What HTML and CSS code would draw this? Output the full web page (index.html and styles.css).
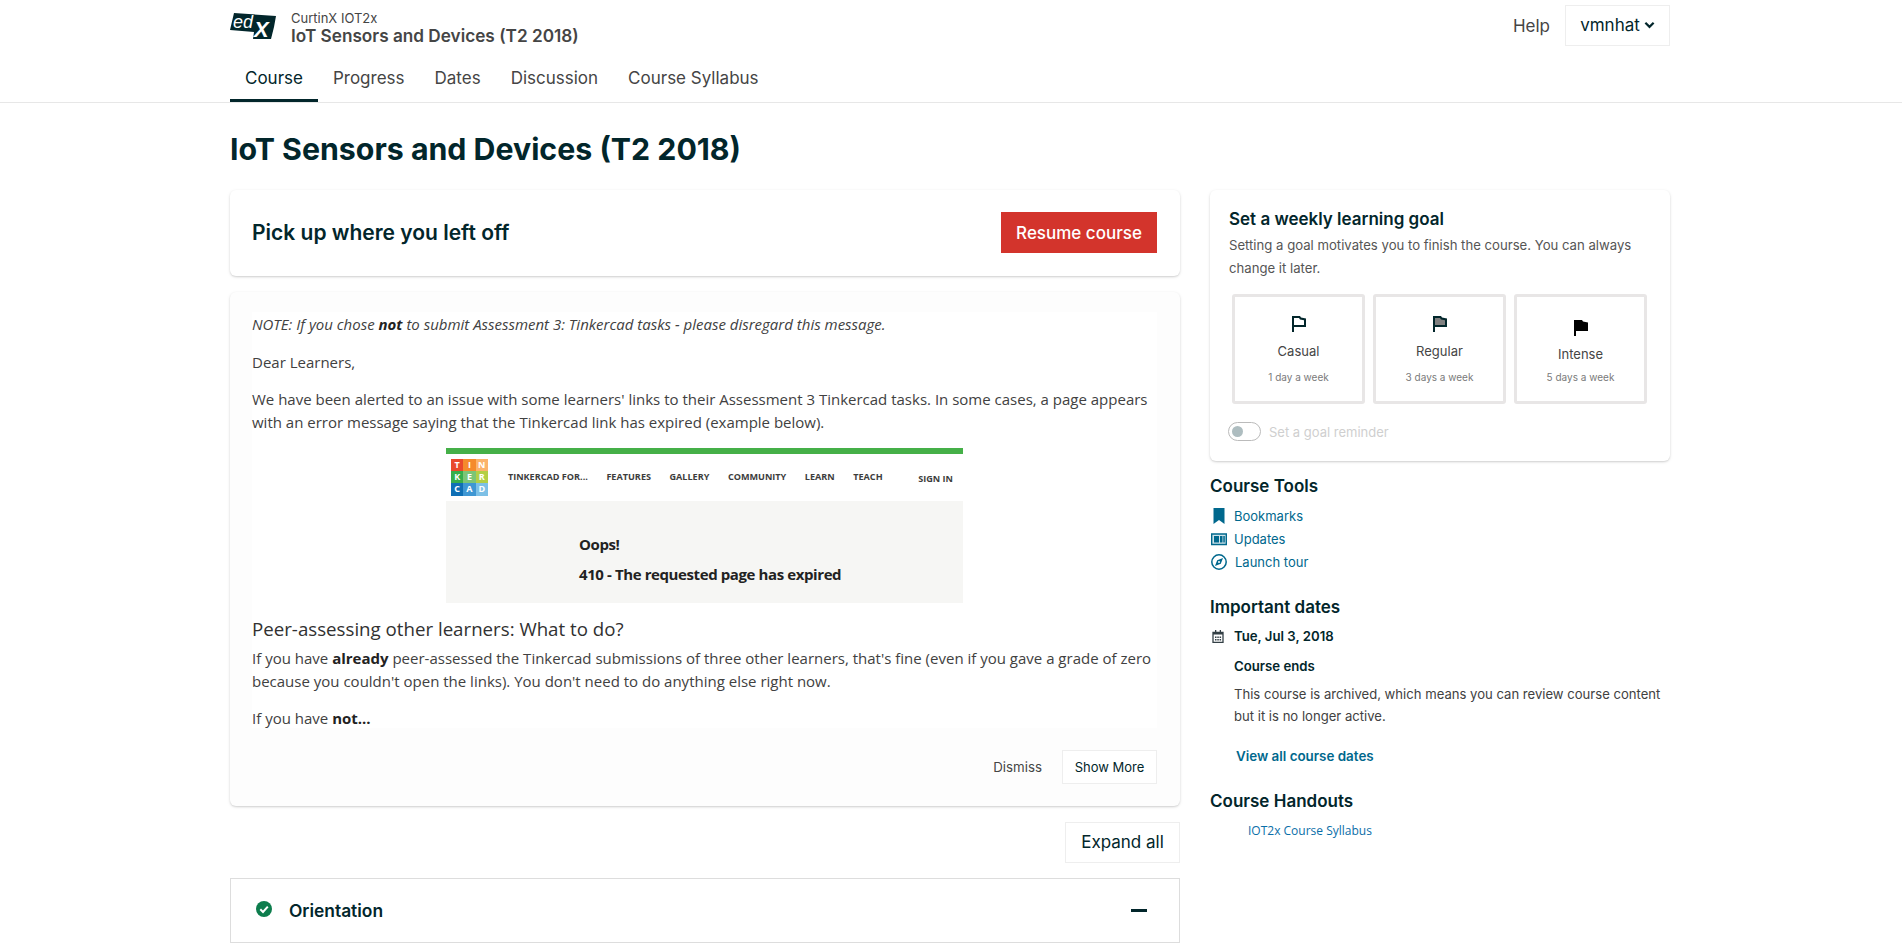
FILE: index.html
```html
<!DOCTYPE html>
<html lang="en">
<head>
    <meta charset="UTF-8">
    <title>Course Home | IoT Sensors and Devices (T2 2018)</title>
    <link rel="stylesheet" href="styles.css">
</head>
<body>
    <!-- Header -->
    <header class="site-header">
        <div class="wrap header-top">
            <svg class="logo" viewBox="0 0 46 26" aria-label="edX">
                <polygon points="4,0 46,3 44,14 41,26 23,26 24,19 0,17" fill="#02262b"/>
                <text x="3" y="15" class="logo-ed">ed</text>
                <text x="24" y="24" class="logo-x">X</text>
            </svg>
            <div class="course-id">
                <div class="course-org">CurtinX IOT2x</div>
                <div class="course-name">IoT Sensors and Devices (T2 2018)</div>
            </div>
            <a class="help" href="#">Help</a>
            <button class="user-btn">vmnhat
                <svg viewBox="0 0 12 8" class="chev"><path d="M1.500 1.500 6 6l4.500-4.500" fill="none" stroke="#02262b" stroke-width="2.400"/></svg>
            </button>
        </div>
        <nav class="wrap tabs">
            <a class="tab active" href="#">Course</a>
            <a class="tab" href="#">Progress</a>
            <a class="tab" href="#">Dates</a>
            <a class="tab" href="#">Discussion</a>
            <a class="tab" href="#">Course Syllabus</a>
        </nav>
    </header>

    <div class="wrap">
        <h1 class="page-title">IoT Sensors and Devices (T2 2018)</h1>

        <div class="columns">
            <!-- Main column -->
            <main>
                <section class="card resume">
                    <h2>Pick up where you left off</h2>
                    <button class="btn-red">Resume course</button>
                </section>

                <section class="card welcome">
                    <div class="welcome-body">
                        <p><em>NOTE: If you chose <strong>not</strong> to submit Assessment 3: Tinkercad tasks - please disregard this message.</em></p>
                        <p>Dear Learners,</p>
                        <p class="before-shot">We have been alerted to an issue with some learners' links to their Assessment 3 Tinkercad tasks. In some cases, a page appears with an error message saying that the Tinkercad link has expired (example below).</p>

                        <!-- Captura da pagina do Tinkercad -->
                        <div class="tk-shot">
                            <div class="tk-bar"></div>
                            <div class="tk-nav">
                                <div class="tk-logo">
                                    <span class="c1">T</span><span class="c2">I</span><span class="c3">N</span>
                                    <span class="c4">K</span><span class="c5">E</span><span class="c6">R</span>
                                    <span class="c7">C</span><span class="c8">A</span><span class="c9">D</span>
                                </div>
                                <span class="tk-item tk-first">TINKERCAD FOR...</span>
                                <span class="tk-item">FEATURES</span>
                                <span class="tk-item">GALLERY</span>
                                <span class="tk-item">COMMUNITY</span>
                                <span class="tk-item">LEARN</span>
                                <span class="tk-item">TEACH</span>
                                <span class="tk-item tk-sign">SIGN IN</span>
                            </div>
                            <div class="tk-error">
                                <div>Oops!</div>
                                <div>410 - The requested page has expired</div>
                            </div>
                        </div>

                        <h3>Peer-assessing other learners: What to do?</h3>
                        <p>If you have <strong>already</strong> peer-assessed the Tinkercad submissions of three other learners, that's fine (even if you gave a grade of zero because you couldn't open the links). You don't need to do anything else right now.</p>
                        <p>If you have <strong>not...</strong></p>
                    </div>
                    <div class="welcome-actions">
                        <a class="dismiss" href="#">Dismiss</a>
                        <button class="btn-light btn-small">Show More</button>
                    </div>
                </section>

                <div class="expand-row">
                    <button class="btn-light btn-expand">Expand all</button>
                </div>

                <section class="outline">
                    <div class="outline-row">
                        <svg class="check" viewBox="0 0 16 16"><circle cx="8" cy="8" r="8" fill="#0d7d4d"/><path d="M4.300 8.300 7 11l4.800-5.400" fill="none" stroke="#fff" stroke-width="2"/></svg>
                        <span class="outline-title">Orientation</span>
                        <span class="minus"></span>
                    </div>
                </section>
            </main>

            <!-- Sidebar -->
            <aside>
                <section class="card goal">
                    <h4>Set a weekly learning goal</h4>
                    <p class="goal-text">Setting a goal motivates you to finish the course. You can always change it later.</p>
                    <div class="goal-options">
                        <div class="goal-option">
                            <svg class="flag" viewBox="0 0 16 16"><path d="M1 0v16h2V11H15V2.500L10 1.500 9 0z" fill="#02262b"/><path d="M3 2H8l1 1.500 4 .8V9H3z" fill="#fff"/></svg>
                            <div class="goal-name">Casual</div>
                            <div class="goal-days">1 day a week</div>
                        </div>
                        <div class="goal-option">
                            <svg class="flag" viewBox="0 0 16 16"><path d="M1 0v16h2V11H15V2.500L10 1.500 9 0z" fill="#02262b"/><path d="M3 2H8l1 1.500 4 .8V9H3z" fill="#808080"/></svg>
                            <div class="goal-name">Regular</div>
                            <div class="goal-days">3 days a week</div>
                        </div>
                        <div class="goal-option goal-intense">
                            <svg class="flag" viewBox="0 0 16 16"><path d="M1 0v16h2V11H15V2.500L10 1.500 9 0z" fill="#000"/></svg>
                            <div class="goal-name">Intense</div>
                            <div class="goal-days">5 days a week</div>
                        </div>
                    </div>
                    <div class="reminder">
                        <span class="toggle"><span class="knob"></span></span>
                        <span>Set a goal reminder</span>
                    </div>
                </section>

                <section class="side-block tools">
                    <h4>Course Tools</h4>
                    <a class="tool" href="#">
                        <svg class="tool-icon" viewBox="0 0 16 16"><path d="M2.500 0h11v16L8 12l-5.500 4z" fill="#00688d"/></svg>
                        Bookmarks
                    </a>
                    <a class="tool" href="#">
                        <svg class="tool-icon" viewBox="0 0 16 16"><path d="M.7 3h14.600v10.500H.7z" fill="#cfe3ea" stroke="#00688d" stroke-width="1.400"/><path d="M3 5h5v6.500H3zM9 5h2.500v6.500H9zM12.300 5h1.500v6.500h-1.500z" fill="#00688d"/></svg>
                        Updates
                    </a>
                    <a class="tool tool-tour" href="#">
                        <svg class="tool-icon" viewBox="0 0 16 16"><circle cx="8" cy="8" r="7.200" fill="none" stroke="#00688d" stroke-width="1.500"/><path d="M12 4 9.800 9.800 4 12 6.200 6.200z" fill="#00688d"/><circle cx="8" cy="8" r="1" fill="#fff"/></svg>
                        Launch tour
                    </a>
                </section>

                <section class="side-block dates">
                    <h4>Important dates</h4>
                    <div class="date-line">
                        <svg class="cal" viewBox="0 0 12 13"><path d="M1 2.500h10v10H1z" fill="none" stroke="#333f45" stroke-width="1.300"/><path d="M1 2h10v2.500H1zM3 0h1.300v3H3zM7.700 0H9v3H7.700z" fill="#333f45"/><path d="M3 6.500h1.500V8H3zM5.300 6.500h1.500V8H5.300zM7.600 6.500h1.500V8H7.600zM3 9h1.500v1.500H3zM5.300 9h1.500v1.500H5.300zM7.600 9h1.500v1.500H7.600z" fill="#333f45"/></svg>
                        Tue, Jul 3, 2018
                    </div>
                    <div class="date-detail">
                        <div class="date-title">Course ends</div>
                        <p>This course is archived, which means you can review course content but it is no longer active.</p>
                    </div>
                    <a class="all-dates" href="#">View all course dates</a>
                </section>

                <section class="side-block handouts">
                    <h4>Course Handouts</h4>
                    <a class="handout" href="#">IOT2x Course Syllabus</a>
                </section>
            </aside>
        </div>
    </div>
</body>
</html>
```

FILE: styles.css
```css
/* Geral */
html, body {
    height: 100%;
    overflow: hidden;
}

body {
    margin: 0;
    font-family: Inter, "Liberation Sans", sans-serif;
    color: #454545;
    background-color: #fff;
}

a {
    text-decoration: none;
}

.wrap {
    width: 1442px;
    margin: 0 auto;
}

/* Cabecalho */
.site-header {
    border-bottom: 1px solid #e7e7e7;
    height: 102px;
}

.header-top {
    display: flex;
    align-items: center;
    height: 53px;
}

.logo {
    width: 46px;
    height: 26px;
    margin-right: 15px;
    margin-top: -1px;
    overflow: visible;
}

.logo-ed {
    font-family: "Liberation Sans", sans-serif;
    font-style: italic;
    font-size: 18px;
    fill: #fff;
}

.logo-x {
    font-family: "Liberation Sans", sans-serif;
    font-style: italic;
    font-weight: bold;
    font-size: 22px;
    fill: #fff;
}

.course-id {
    flex: 1;
    margin-top: 2px;
}

.course-org {
    font-size: 13px;
    line-height: 16px;
    color: #454545;
}

.course-name {
    font-size: 17.200px;
    font-weight: 600;
    line-height: 20px;
    color: #454545;
}

.help {
    font-size: 17px;
    color: #454545;
    margin-right: 15px;
    margin-top: -2px;
}

.user-btn {
    display: flex;
    align-items: center;
    gap: 4px;
    width: 105px;
    height: 41px;
    justify-content: center;
    margin: -3px 2px 0 0;
    background-color: #fff;
    border: 1px solid #eee;
    font-family: inherit;
    font-size: 17px;
    color: #02262b;
}

.chev {
    width: 11px;
    height: 8px;
}

.tabs {
    display: flex;
    height: 49px;
}

.tab {
    padding: 0 15px;
    font-size: 17px;
    line-height: 50px;
    height: 46px;
    color: #454545;
}

.tab.active {
    color: #02262b;
    border-bottom: 3px solid #02262b;
}

/* Titulo */
.page-title {
    margin: 0;
    padding-top: 26px;
    height: 61px;
    font-size: 30.300px;
    font-weight: 700;
    line-height: 40px;
    color: #02262b;
}

.columns {
    display: grid;
    grid-template-columns: 950px 460px;
    column-gap: 30px;
}

/* Cartoes */
.card {
    background-color: #fff;
    border-radius: 6px;
    box-shadow: 0 1px 2px rgba(0, 0, 0, 0.15), 0 1px 4px rgba(0, 0, 0, 0.06);
}

.resume {
    display: flex;
    align-items: center;
    justify-content: space-between;
    box-sizing: border-box;
    height: 86px;
    padding: 0 23px 0 22px;
    margin-bottom: 16px;
}

.resume h2 {
    margin: -2px 0 0;
    font-size: 21px;
    font-weight: 600;
    color: #02262b;
}

.btn-red {
    width: 156px;
    height: 41px;
    margin-top: -1px;
    background-color: #d3342c;
    border: none;
    color: #fff;
    font-family: inherit;
    font-size: 17px;
    font-weight: 500;
}

.welcome {
    box-sizing: border-box;
    height: 514px;
    padding: 20px 23px 0 22px;
    background-color: #fdfdfd;
}

.welcome-body {
    box-sizing: border-box;
    height: 416px;
    padding-top: 1px;
    background-color: #fff;
    font-family: "Open Sans", sans-serif;
    font-size: 15px;
    line-height: 23px;
    color: #414141;
}

.welcome-body p {
    margin: 0 0 14.600px;
}

.welcome-body .before-shot {
    margin-bottom: 13.600px;
}

.welcome-body h3 {
    margin: 13px 0 5px;
    font-size: 18.700px;
    font-weight: 400;
    line-height: 26px;
    color: #313131;
}

.welcome-body strong {
    color: #222;
}

/* Captura do Tinkercad */
.tk-shot {
    width: 517px;
    height: 155px;
    margin: 0 auto;
    display: flex;
    flex-direction: column;
    font-family: "Open Sans", sans-serif;
}

.tk-bar {
    height: 6px;
    background-color: #45b048;
}

.tk-nav {
    display: flex;
    align-items: center;
    height: 47px;
    padding-left: 5px;
    font-size: 9.100px;
    font-weight: 700;
    line-height: 12px;
    color: #3d3d3d;
}

.tk-logo {
    display: grid;
    grid-template-columns: repeat(3, 12.300px);
    grid-auto-rows: 12.300px;
    margin: 0 20px 0 0;
    font-size: 9px;
    text-align: center;
    color: #fff;
}

.c1 { background-color: #e9492d; }
.c2 { background-color: #f58a2c; }
.c3 { background-color: #fbb36b; }
.c4 { background-color: #37ae4b; }
.c5 { background-color: #7cc576; }
.c6 { background-color: #b3cf45; }
.c7 { background-color: #0f6fb5; }
.c8 { background-color: #3f97d3; }
.c9 { background-color: #7dc0e6; }

.tk-item {
    margin-right: 18.500px;
    white-space: nowrap;
}

.tk-sign {
    margin: 3px 0 0 auto;
    padding-right: 10px;
}

.tk-error {
    flex: 1;
    padding: 28px 0 0 133px;
    background-color: #f6f6f4;
    font-size: 15px;
    font-weight: 700;
    line-height: 30px;
    letter-spacing: -0.4px;
    color: #222;
}

/* Acoes do aviso */
.welcome-actions {
    display: flex;
    align-items: center;
    justify-content: flex-end;
    gap: 20px;
    margin-top: 22px;
}

.dismiss {
    font-size: 13.300px;
    color: #454545;
}

.btn-light {
    background-color: #fff;
    border: 1px solid #eee;
    font-family: inherit;
    color: #02262b;
}

.btn-small {
    width: 95px;
    height: 34px;
    font-size: 13px;
}

.expand-row {
    display: flex;
    justify-content: flex-end;
    margin: 16px 0 15px;
}

.btn-expand {
    width: 115px;
    height: 41px;
    padding-bottom: 3px;
    font-size: 17px;
}

/* Secoes do curso */
.outline {
    border: 1px solid #ddd;
    border-bottom: none;
}

.outline-row {
    display: flex;
    align-items: center;
    box-sizing: border-box;
    height: 64px;
    padding: 0 32px 0 25px;
    border-bottom: 1px solid #ddd;
}

.check {
    width: 16px;
    height: 16px;
    margin-right: 17px;
    margin-top: -3px;
}

.outline-title {
    flex: 1;
    font-size: 17.400px;
    font-weight: 600;
    color: #02262b;
}

.minus {
    width: 16px;
    height: 3px;
    background-color: #02262b;
}

/* Barra lateral */
.goal {
    box-sizing: border-box;
    height: 271px;
    padding: 19px 19px 0;
}

h4 {
    margin: 0;
    font-size: 17px;
    font-weight: 600;
    line-height: 20px;
    color: #02262b;
}

.goal-text {
    margin: 5px 0 0;
    font-size: 13.150px;
    line-height: 23px;
    color: #555;
}

.goal-options {
    display: grid;
    grid-template-columns: repeat(3, 133px);
    column-gap: 8px;
    margin: 14px 0 0 3px;
}

.goal-option {
    box-sizing: border-box;
    height: 110px;
    padding-top: 19px;
    border: 3px solid #e8e6e6;
    border-radius: 3px;
    text-align: center;
}

.flag {
    display: block;
    width: 16px;
    height: 16px;
    margin: 0 auto 11px;
}

.goal-intense .flag {
    margin: 4px auto 10px;
}

.goal-name {
    font-size: 13px;
    line-height: 16px;
    color: #454545;
}

.goal-days {
    margin-top: 11px;
    font-size: 10px;
    line-height: 14px;
    color: #7a7a7a;
}

.goal-intense .goal-days {
    margin-top: 8px;
}

.reminder {
    display: flex;
    align-items: center;
    gap: 8px;
    margin: 18px 0 0 -1px;
    font-size: 13px;
    color: #cfcfcf;
}

.toggle {
    display: flex;
    align-items: center;
    box-sizing: border-box;
    width: 33px;
    height: 19px;
    padding-left: 3px;
    border: 1px solid #bbb;
    border-radius: 10px;
}

.knob {
    width: 11px;
    height: 11px;
    background-color: #aebdc0;
    border-radius: 50%;
}

.tools {
    margin-top: 15px;
}

.tools h4 {
    margin-bottom: 8px;
}

.tool {
    display: flex;
    align-items: center;
    gap: 7px;
    height: 23px;
    font-size: 13px;
    color: #00688d;
}

.tool-icon {
    width: 16px;
    height: 16px;
    margin-left: 1px;
}

.tool-tour {
    gap: 8px;
}

.dates {
    margin-top: 24px;
}

.date-line {
    display: flex;
    align-items: center;
    gap: 10px;
    margin-top: 9px;
    font-size: 13.200px;
    font-weight: 600;
    line-height: 20px;
    color: #02262b;
}

.cal {
    width: 12px;
    height: 13px;
    margin-left: 2px;
}

.date-detail {
    margin: 10px 0 0 24px;
    font-size: 13.100px;
    color: #414141;
}

.date-title {
    font-weight: 600;
    font-size: 13.200px;
    line-height: 20px;
    color: #02262b;
}

.date-detail p {
    margin: 7px 0 0;
    line-height: 22px;
}

.all-dates {
    display: block;
    margin: 19px 0 0 26px;
    font-size: 13.400px;
    font-weight: 600;
    line-height: 20px;
    color: #00688d;
}

.handouts {
    margin-top: 25px;
}

.handout {
    display: block;
    margin: 10px 0 0 38px;
    font-family: "Open Sans", sans-serif;
    font-size: 12px;
    line-height: 20px;
    color: #0a6ea8;
}
```
